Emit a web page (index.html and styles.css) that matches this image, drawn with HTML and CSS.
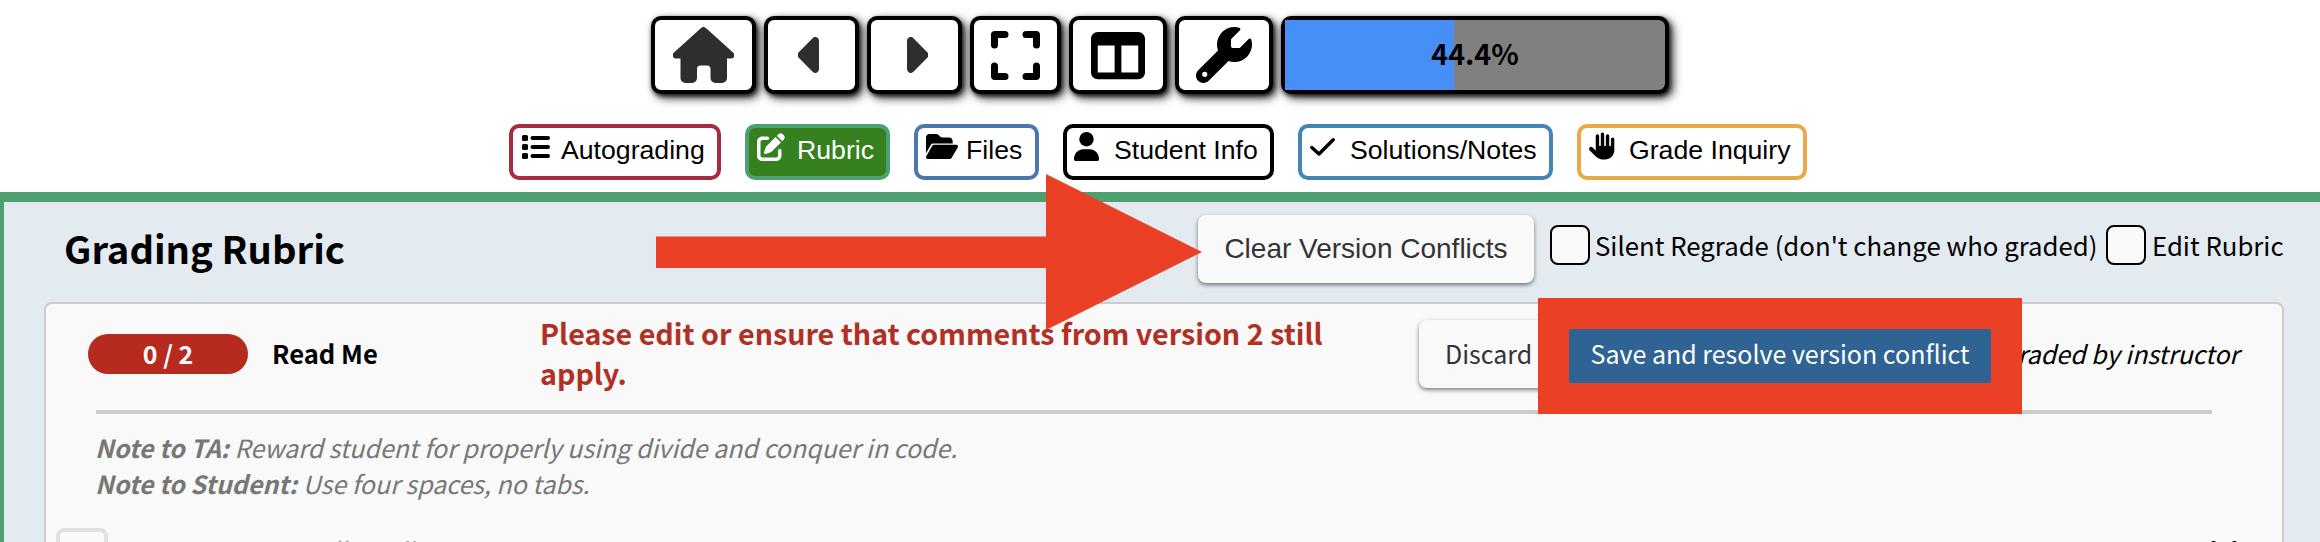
FILE: index.html
```html
<!DOCTYPE html>
<html lang="en">
<head>
<meta charset="utf-8">
<title>Grading Rubric</title>
<link rel="stylesheet" href="styles.css">
</head>
<body>
<header class="toolbar">
  <button class="tool home"><svg width="61" height="56" viewBox="0 0 61 56"><path fill="#2e2e2e" d="M27.8 1.2a4 4 0 0 1 5.4 0L60 25.600a3.200 3.200 0 0 1-2 5.900H54V51a5 5 0 0 1-5 5H42.500a5 5 0 0 1-5-5V42a3.500 3.500 0 0 0-3.500-3.500H27.500A3.500 3.500 0 0 0 24 42v9a5 5 0 0 1-5 5H12.500a5 5 0 0 1-5-5V31.500H3a3.200 3.200 0 0 1-2-5.900z"/></svg></button>
  <button class="tool prev"><svg width="21" height="36" viewBox="0 0 21 36"><path fill="#2e2e2e" d="M1 15 14.600 1.200A3.700 3.700 0 0 1 21 3.700V32.300a3.700 3.700 0 0 1-6.400 2.500L1 21a4 4 0 0 1 0-6z"/></svg></button>
  <button class="tool next"><svg width="21" height="36" viewBox="0 0 21 36"><path fill="#2e2e2e" d="M20 15 6.400 1.200A3.700 3.700 0 0 0 0 3.700V32.300a3.700 3.700 0 0 0 6.400 2.500L20 21a4 4 0 0 0 0-6z"/></svg></button>
  <button class="tool full"><svg width="49" height="49" viewBox="0 0 448 448"><path d="M32 0C14 0 0 14 0 32v96a32 32 0 0 0 64 0V64h64a32 32 0 0 0 0-64zM64 320a32 32 0 0 0-64 0v96c0 18 14 32 32 32h96a32 32 0 0 0 0-64H64zM320 0a32 32 0 0 0 0 64h64v64a32 32 0 0 0 64 0V32c0-18-14-32-32-32zM448 320a32 32 0 0 0-64 0v64h-64a32 32 0 0 0 0 64h96c18 0 32-14 32-32z"/></svg></button>
  <button class="tool cols"><svg width="54" height="49" viewBox="0 0 512 448"><path fill-rule="evenodd" d="M0 64C0 29 29 0 64 0h384c35 0 64 29 64 64v320c0 35-29 64-64 64H64c-35 0-64-29-64-64zm64 64v256h160V128zm384 0H288v256h160z"/></svg></button>
  <button class="tool wrench"><svg width="56" height="56" viewBox="0 0 512 512"><path d="M352 320c88.400 0 160-71.600 160-160 0-15.300-2.200-30.100-6.200-44.200-3.100-10.800-16.400-13.200-24.300-5.300l-76.800 76.800a16 16 0 0 1-11.300 4.700H336a16 16 0 0 1-16-16v-57.400c0-4.200 1.700-8.300 4.700-11.300l76.800-76.800c7.900-7.900 5.400-21.200-5.300-24.300C382.100 2.200 367.300 0 352 0 263.600 0 192 71.600 192 160c0 19.100 3.400 37.500 9.500 54.500L19.900 396.100C7.200 408.800 0 426.100 0 444.100 0 481.600 30.400 512 67.900 512c18 0 35.300-7.200 48-19.900l181.600-181.600c17 6.200 35.400 9.500 54.500 9.500zM80 408a24 24 0 1 1 0 48 24 24 0 1 1 0-48z"/></svg></button>
  <div class="progress"><div class="progress-fill" style="width:44.4%"></div><span class="progress-text">44.4%</span></div>
</header>
<nav class="tabs">
  <button class="tab t-auto"><svg class="ic" width="28" height="24" viewBox="0 0 28 24"><rect width="6" height="6" rx="1.500"/><rect y="9" width="6" height="6" rx="1.500"/><rect y="18" width="6" height="6" rx="1.500"/><rect x="8.500" y="1" width="19.500" height="4" rx="2"/><rect x="8.500" y="10" width="19.500" height="4" rx="2"/><rect x="8.500" y="19" width="19.500" height="4" rx="2"/></svg><span class="lbl">Autograding</span></button>
  <button class="tab t-rubric"><svg class="ic" width="28" height="28" viewBox="0 0 512 512"><path fill="#fff" d="M471.600 21.700c-21.900-21.900-57.300-21.900-79.200 0L362.300 51.700l97.900 97.900 30.100-30.100c21.900-21.900 21.900-57.300 0-79.200zM172.200 241.700c-6.100 6.100-10.800 13.600-13.500 21.900l-29.600 88.800c-2.900 8.600-.6 18.100 5.800 24.600s15.900 8.700 24.600 5.800l88.800-29.600c8.200-2.700 15.700-7.400 21.900-13.500L437.700 172.300 339.700 74.300zM96 64c-53 0-96 43-96 96v256c0 53 43 96 96 96h256c53 0 96-43 96-96v-96a32 32 0 0 0-64 0v96a32 32 0 0 1-32 32H96a32 32 0 0 1-32-32V160a32 32 0 0 1 32-32h96a32 32 0 0 0 0-64z"/></svg><span class="lbl">Rubric</span></button>
  <button class="tab t-files"><svg class="ic" width="32" height="25" viewBox="0 0 576 448"><path d="M88.700 191.800C97.200 177.200 112.800 168 130 168H480v-40c0-35-29-64-64-64H298.500c-17 0-33.300-6.700-45.300-18.700L226.700 18.700C214.700 6.700 198.500 0 181.500 0H64C29 0 0 29 0 64v280zm27.600 16.100c5.800-9.900 16.300-15.900 27.700-15.900h400c11.500 0 22 6.100 27.700 16.100s5.600 22.200-.1 32.100l-112 192c-5.600 9.700-16.100 15.900-27.600 15.900H32c-11.500 0-22-6.100-27.700-16.100s-5.700-22.200.1-32.100z"/></svg><span class="lbl">Files</span></button>
  <button class="tab t-student"><svg class="ic" width="25" height="29" viewBox="0 0 25 29"><ellipse cx="12.500" cy="7.200" rx="7.200" ry="7.200"/><path d="M0 27.200C0 21.500 4 17.300 9.500 17.300h6c5.500 0 9.500 4.200 9.500 9.900 0 1-.7 1.800-1.700 1.800H1.700C.7 29 0 28.200 0 27.200z"/></svg><span class="lbl">Student Info</span></button>
  <button class="tab t-sol"><svg class="ic" width="25" height="18" viewBox="0 0 25 18"><path d="M1.800 9.500 9 16 23.200 1.800" fill="none" stroke="#000" stroke-width="3.400" stroke-linecap="round" stroke-linejoin="round"/></svg><span class="lbl">Solutions/Notes</span></button>
  <button class="tab t-inq"><svg class="ic" width="27" height="28" viewBox="0 0 512 512"><path d="M288 32a32 32 0 0 0-64 0v208a16 16 0 0 1-32 0V64a32 32 0 0 0-64 0v272c0 1.500 0 3.100.1 4.600L67.600 283c-16-15.200-41.300-14.600-56.600 1.400s-14.600 41.300 1.400 56.600L124.800 448c43.100 41.100 100.400 64 160 64H304c97.200 0 176-78.800 176-176V128a32 32 0 0 0-64 0v112a16 16 0 0 1-32 0V64a32 32 0 0 0-64 0v176a16 16 0 0 1-32 0z"/></svg><span class="lbl">Grade Inquiry</span></button>
</nav>
<main class="panel">
  <div class="panel-head">
    <h1 class="title">Grading Rubric</h1>
    <button class="btn clear">Clear Version Conflicts</button>
    <i class="box"></i><span class="opt silent">Silent Regrade (don't change who graded)</span>
    <i class="box"></i><span class="opt edit">Edit Rubric</span>
  </div>
  <section class="card">
    <div class="row">
      <span class="pill">0 / 2</span>
      <strong class="name">Read Me</strong>
      <p class="warn">Please edit or ensure that comments from version 2 still<br>apply.</p>
      <button class="btn discard">Discard</button>
      <div class="mark"><button class="save">Save and resolve version conflict</button></div>
      <em class="graded">Graded by instructor</em>
    </div>
    <div class="notes">
      <p><b>Note to TA:</b> Reward student for properly using divide and conquer in code.</p>
      <p><b>Note to Student:</b> Use four spaces, no tabs.</p>
    </div>
    <div class="credit">
      <span class="credit-box"></span><span class="credit-text">Full Credit</span>
      <svg class="handle" width="28" height="6" viewBox="0 0 28 6"><circle cx="3.500" cy="3" r="3"/><circle cx="24.500" cy="3" r="3"/></svg>
    </div>
  </section>
  <svg class="arrow" width="546" height="156" viewBox="0 0 546 156"><path fill="#ea4025" d="M0 62.500H390V0L546 78 390 156V94H0z"/></svg>
</main>
</body>
</html>
```
FILE: styles.css
```css
* { box-sizing: border-box; }
body { margin: 0; width: 2320px; height: 542px; overflow: hidden; background: #fff; color: #000; font-family: "Noto Sans CJK SC", "Noto Sans", sans-serif; font-size: 25px; }
button { margin: 0; padding: 0; font: inherit; color: inherit; white-space: nowrap; }
h1, p { margin: 0; }
svg { display: block; flex: none; }

.toolbar { display: flex; gap: 8px; padding: 16px 0 0 651px; height: 124px; }
.tool { display: flex; align-items: center; justify-content: center; height: 78px; border: 4px solid #000; border-radius: 10px; background: #fff; box-shadow: 4px 4px 10px rgba(0,0,0,.8), 1px 2px 4px rgba(0,0,0,.7); }
.home { width: 105px; }
.prev, .next { width: 95px; }
.prev { padding-right: 7px; }
.next { padding-left: 6px; }
.full { width: 91px; }
.cols, .wrench { width: 98px; }
.progress { position: relative; width: 388px; height: 78px; border: 4px solid #000; border-radius: 10px; background: linear-gradient(#808080, #808080) padding-box, #000; box-shadow: 4px 4px 10px rgba(0,0,0,.8), 1px 2px 4px rgba(0,0,0,.7); }
.progress-fill { height: 100%; background: #458ff7; }
.progress-text { position: absolute; inset: 0; text-align: center; line-height: 65px; font-weight: 700; font-size: 28.6px; }

.tabs { display: flex; gap: 24px; padding-left: 509px; height: 68px; }
.tab { display: flex; height: 56px; border: 4px solid #000; border-radius: 10px; background: #fff; font-family: "Liberation Sans", Arial, sans-serif; font-size: 26.67px; line-height: 30px; padding-top: 7px; }
.t-auto { width: 212px; border-color: #a82c40; padding-left: 9px; }
.t-auto .ic { margin-right: 11px; }
.t-rubric { width: 145px; border-color: #4da06f; background: #36801f; color: #fff; padding-left: 8px; }
.t-rubric .ic { margin: -2px 12px 0 0; }
.t-files { width: 125px; border-color: #4a78ae; padding-left: 8px; }
.t-files .ic { margin: -1px 8px 0 0; }
.t-student { width: 211px; padding-left: 7px; }
.t-student .ic { margin: -3px 15px 0 0; }
.t-sol { width: 255px; border-color: #4386b5; padding-left: 8px; }
.t-sol .ic { margin: 3px 15px 0 0; }
.t-inq { width: 230px; border-color: #e8a948; padding-left: 8px; }
.t-inq .ic { margin: -3px 13px 0 0; }

.panel { position: relative; height: 350px; border-top: 10px solid #4da06f; border-left: 4px solid #4da06f; background: #e3eaf0; padding-left: 40px; }
.panel-head { display: flex; height: 100px; padding: 13px 0 0 20px; }
.title { width: 1134px; font-size: 38.2px; line-height: 65px; font-weight: 700; }
.btn { height: 68px; border: 0; border-radius: 8px; background: #f9f9f9; color: #333; box-shadow: 0 2px 4px rgba(0,0,0,.5); flex: none; }
.clear { width: 336px; margin-right: 16px; font-family: "Liberation Sans", Arial, sans-serif; font-size: 28px; }
.box { width: 40px; height: 40px; margin-top: 10px; border: 2px solid #000; border-radius: 8px; background: #f9f9f9; flex: none; }
.opt { line-height: 59px; white-space: nowrap; font-size: 25.78px; }
.silent { width: 516px; padding-left: 5px; }
.edit { padding-left: 6px; }

.card { width: 2240px; height: 240px; border: 2px solid #ccc; border-bottom: 0; border-radius: 8px 8px 0 0; background: #f9f9f9; overflow: hidden; }
.row { display: flex; height: 106px; padding-left: 42px; }
.pill { width: 160px; height: 40px; margin-top: 30px; border-radius: 20px; background: #b72b1f; color: #fff; font-weight: 700; text-align: center; line-height: 38px; flex: none; }
.name { width: 267px; padding-left: 24px; margin-top: 30px; line-height: 38px; font-size: 25.6px; flex: none; }
.warn { width: 904px; margin-top: 9px; flex: none; padding-left: 25px; color: #b03024; font-weight: 700; font-size: 28.67px; line-height: 40px; white-space: nowrap; }
.discard { width: 160px; margin-top: 16px; text-align: left; padding: 0 0 2px 26px; }
/* starts above the card's edge, over the end of the discard button */
.mark { position: absolute; left: 1534px; top: 96px; width: 484px; height: 116px; background: #ea4025; padding: 31px 0 0 31px; }
.save { width: 422px; height: 54px; border: 0; padding-bottom: 6px; background: #2e6393; color: #fff; }
.graded { display: flex; justify-content: flex-end; width: 660px; height: 38px; margin-top: 30px; line-height: 38px; font-size: 25px; white-space: nowrap; }
.notes { width: 2116px; height: 118px; margin-left: 50px; border-top: 4px solid #ccc; padding-top: 15px; color: #777; font-style: italic; line-height: 36px; text-indent: -1px; }
.credit { display: flex; height: 60px; margin-left: 10px; }
.credit-box { width: 52px; height: 52px; border: 4px solid #e0e0e0; border-radius: 8px; }
.credit-text { margin-left: 200px; line-height: 44px; color: #999; }
.handle { margin: 13px 44px 0 auto; }
.arrow { position: absolute; left: 652px; top: -28px; }
```
